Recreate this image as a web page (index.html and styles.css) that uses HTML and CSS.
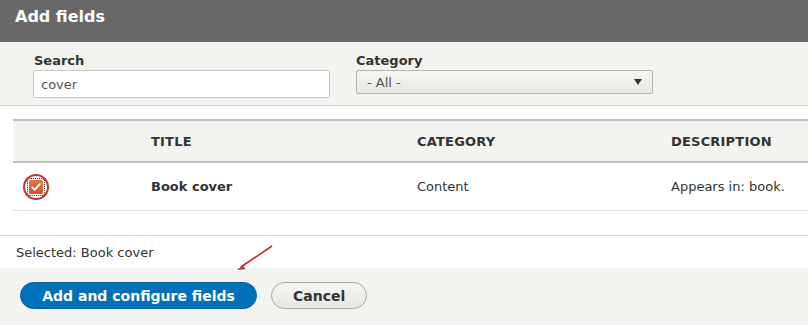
FILE: index.html
```html
<!DOCTYPE html>
<html lang="en">
  <head>
    <meta charset="UTF-8" />
    <meta name="viewport" content="width=device-width, initial-scale=1.0" />
    <title>Add fields</title>
    <link rel="stylesheet" href="styles.css">
  </head>

  <body>
    <div class="dialog">
      <div class="title-bar">Add fields</div>

      <div class="filters">
        <div class="filter search">
          <label for="search">Search</label>
          <input type="text" id="search" value="cover" />
        </div>
        <div class="filter category">
          <label>Category</label>
          <div class="select">
            <span>- All -</span>
            <span class="caret"></span>
          </div>
        </div>
      </div>

      <div class="content">
        <table class="fields">
          <thead>
            <tr>
              <th class="col-check"></th>
              <th class="col-title">Title</th>
              <th class="col-cat">Category</th>
              <th class="col-desc">Description</th>
            </tr>
          </thead>
          <tbody>
            <tr>
              <td class="col-check">
                <span class="check-ring">
                  <span class="check-box">
                    <svg width="12" height="12" viewBox="0 0 12 12">
                      <path d="M2.2 6.3 L4.8 8.8 L9.8 3.2" fill="none" stroke="#fff" stroke-width="1.8" stroke-linecap="round" stroke-linejoin="round"/>
                    </svg>
                  </span>
                </span>
              </td>
              <td class="col-title"><strong>Book cover</strong></td>
              <td class="col-cat">Content</td>
              <td class="col-desc">Appears in: book.</td>
            </tr>
            <tr class="empty"><td colspan="4"></td></tr>
          </tbody>
        </table>
      </div>
      <div class="selected">Selected: Book cover</div>

      <div class="actions">
        <button class="btn primary">Add and configure fields</button>
        <button class="btn">Cancel</button>
        <svg class="arrow" width="40" height="30" viewBox="0 0 40 30">
          <line x1="37" y1="2" x2="6" y2="23" stroke="#b8312f" stroke-width="1.6"/>
          <path d="M2 26 L12 17.5 L8 22 L10.5 25 Z" fill="#b8312f"/>
        </svg>
      </div>
    </div>
  </body>
</html>
```

FILE: styles.css
```css
html,
body {
  margin: 0;
  padding: 0;
}

body {
  width: 808px;
  height: 325px;
  overflow: hidden;
  font-family: "DejaVu Sans", "Liberation Sans", sans-serif;
  font-size: 13px;
  color: #333;
  background: #fff;
}

.dialog {
  width: 808px;
}

.title-bar {
  height: 42px;
  box-sizing: border-box;
  padding: 7px 15px 0;
  background: #686868;
  color: #fff;
  font-size: 16px;
  font-weight: bold;
}

.filters {
  display: flex;
  gap: 26px;
  height: 64px;
  box-sizing: border-box;
  padding: 11px 0 0 33px;
  background: #f3f3ef;
  border-bottom: 1px solid #d4d4d0;
}

.filter label {
  display: block;
  font-weight: bold;
  margin: 0 0 1px 1px;
  height: 16px;
  line-height: 16px;
}

.category label {
  margin-left: 0;
}

.filter input {
  width: 297px;
  height: 28px;
  box-sizing: border-box;
  border: 1px solid #c8c8c4;
  border-radius: 2px;
  padding: 0 7px;
  font-family: inherit;
  font-size: 13px;
  color: #555;
  background: #fff;
}

.select {
  display: flex;
  align-items: center;
  justify-content: space-between;
  width: 297px;
  height: 24px;
  margin-top: 1px;
  box-sizing: border-box;
  border: 1px solid #b4b4b0;
  border-radius: 2px;
  padding: 0 10px;
  background: linear-gradient(#f5f5f2, #e8e8e4);
  color: #555;
}

.caret {
  width: 0;
  height: 0;
  border-left: 4px solid transparent;
  border-right: 4px solid transparent;
  border-top: 6px solid #333;
}

.content {
  padding-top: 13px;
  border-bottom: 1px solid #d0d0cc;
}

.fields {
  margin-left: 13px;
  width: 820px;
  border-collapse: collapse;
  table-layout: fixed;
}

.fields th {
  height: 40px;
  padding: 0;
  text-align: left;
  text-transform: uppercase;
  font-size: 13px;
  letter-spacing: 0.2px;
  background: #f3f3ef;
  border-top: 2px solid #c2c2be;
  border-bottom: 2px solid #c2c2be;
}

.fields td {
  height: 47px;
  padding: 0;
  border-bottom: 1px solid #e0e0dc;
}

.fields .empty td {
  height: 24px;
  border-bottom: none;
}

.col-check {
  width: 138px;
}

.col-title {
  width: 266px;
}

.col-cat {
  width: 254px;
}

.check-ring {
  display: inline-flex;
  align-items: center;
  justify-content: center;
  width: 22px;
  height: 22px;
  margin-left: 10px;
  margin-top: 1px;
  border: 2px solid #c8302e;
  border-radius: 50%;
}

.check-box {
  display: flex;
  align-items: center;
  justify-content: center;
  width: 14px;
  height: 14px;
  outline: 1px dotted #222;
  outline-offset: 1px;
  border-radius: 2px;
  background: linear-gradient(#e37a45, #c9542a);
}

.selected {
  height: 32px;
  line-height: 34px;
  padding-left: 16px;
  background: #fff;
}

.actions {
  position: relative;
  display: flex;
  gap: 14px;
  height: 57px;
  box-sizing: border-box;
  padding: 14px 0 0 20px;
  background: #f3f3ef;
}

.btn {
  height: 27px;
  padding: 0 21px;
  border: 1px solid #a6a6a2;
  border-radius: 14px;
  background: linear-gradient(#f6f6f3, #e6e6e2);
  font-family: inherit;
  font-size: 14px;
  font-weight: bold;
  color: #333;
}

.btn.primary {
  width: 237px;
  padding: 0;
  border-color: #0063a2;
  background: #0071b8;
  color: #fff;
}

.arrow {
  position: absolute;
  left: 235px;
  top: -24px;
}
```
